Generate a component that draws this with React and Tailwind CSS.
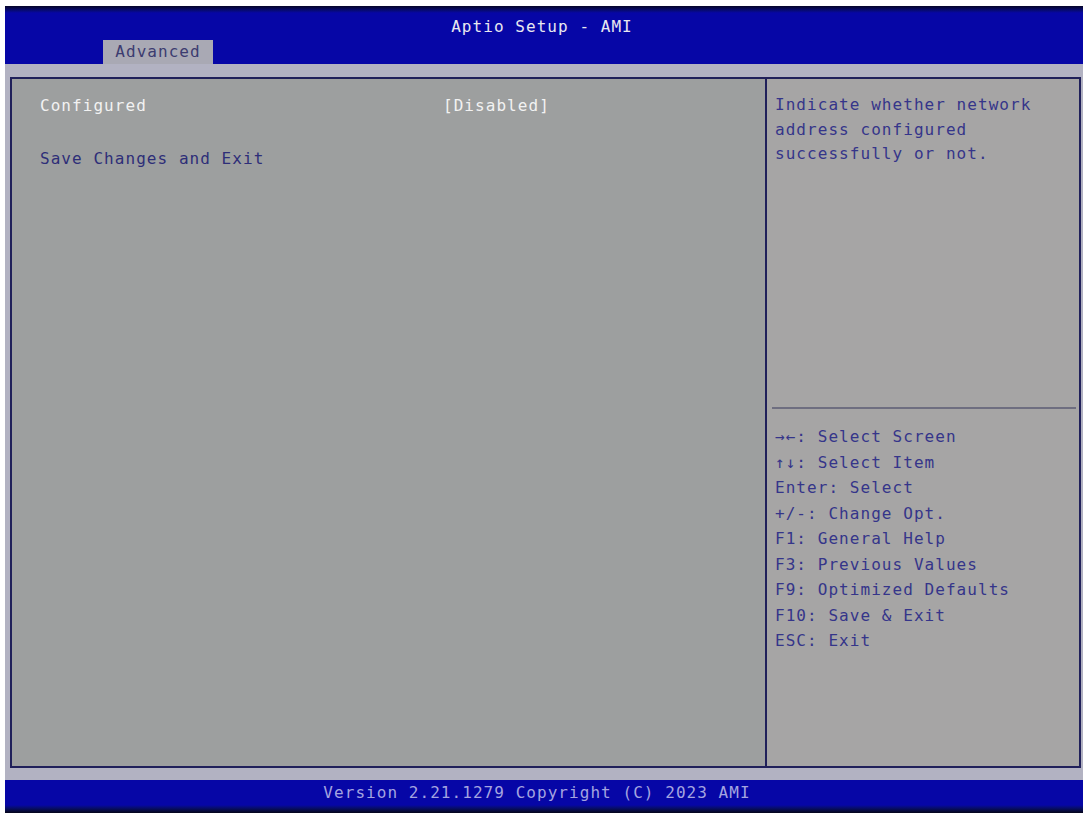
export default function App() {
  const keys = [
    "→←: Select Screen",
    "↑↓: Select Item",
    "Enter: Select",
    "+/-: Change Opt.",
    "F1: General Help",
    "F3: Previous Values",
    "F9: Optimized Defaults",
    "F10: Save & Exit",
    "ESC: Exit",
  ];
  const font = { fontFamily: '"DejaVu Sans Mono", "Liberation Mono", monospace' };
  return (
    <div
      className="w-[1087px] h-[815px] bg-white pt-[6px] pl-[5px] pr-[4px] pb-[2px] overflow-hidden text-[16px] tracking-[1.05px]"
      style={font}
    >
      <div className="flex flex-col h-full">
        {/* header */}
        <div className="h-[58px] bg-[#0606a6] flex flex-col relative">
          <div className="h-[8px] bg-gradient-to-b from-[#05052a] to-[#0606a6]"></div>
          <div className="h-[30px] flex items-center justify-center text-[#e8e8f0] pr-[4px]">
            Aptio Setup - AMI
          </div>
          <div className="flex-1 flex items-end pl-[98px]">
            <div className="w-[110px] h-[24px] bg-[#a9a9b4] text-[#3c3c70] flex items-center justify-center">
              Advanced
            </div>
          </div>
        </div>
        {/* body */}
        <div className="flex-1 bg-[#b2b2c2] pt-[13px] pb-[12px] pl-[5px] pr-[2px] flex">
          <div className="flex-1 flex border-2 border-[#20205a]">
            <div className="w-[755px] bg-[#9d9f9f] border-r-2 border-[#20205a] pl-[28px] pt-[14px] leading-[26.5px]">
              <div className="flex">
                <div className="w-[403px] text-[#f2f2f2]">Configured</div>
                <div className="text-[#f2f2f2]">[Disabled]</div>
              </div>
              <div className="h-[26.5px]"></div>
              <div className="text-[#2e2e78]">Save Changes and Exit</div>
            </div>
            <div className="flex-1 bg-[#a6a5a5] flex flex-col pl-[5px] pr-[3px]">
              <div className="h-[330px] border-b-2 border-[#6e6e80] pl-[3px] pt-[14px] leading-[24.5px] text-[#35358a]">
                <div>Indicate whether network</div>
                <div>address configured</div>
                <div>successfully or not.</div>
              </div>
              <div className="pl-[3px] pt-[15px] leading-[25.5px] text-[#35358a]">
                {keys.map((k) => (
                  <div key={k}>{k}</div>
                ))}
              </div>
            </div>
          </div>
        </div>
        {/* footer */}
        <div className="h-[33px] bg-[#0606a6] flex flex-col">
          <div className="h-[25px] flex items-center justify-center text-[#a4a4e0] pr-[14px]">
            Version 2.21.1279 Copyright (C) 2023 AMI
          </div>
          <div className="flex-1 bg-gradient-to-b from-[#0606a6] to-[#05051a]"></div>
        </div>
      </div>
    </div>
  );
}
